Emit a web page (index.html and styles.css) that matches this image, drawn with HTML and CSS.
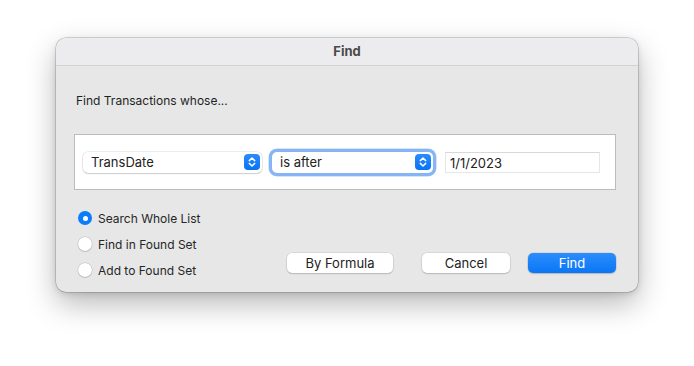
FILE: index.html
```html
<!DOCTYPE html>
<html lang="en">
<head>
    <meta charset="UTF-8">
    <title>Find</title>
    <link rel="stylesheet" href="styles.css">
</head>
<body>
    <div class="window">
        <div class="titlebar">Find</div>

        <div class="content">
            <div class="prompt">Find Transactions whose...</div>

            <div class="criteria">
                <div class="popup popup-field">
                    <span>TransDate</span>
                    <span class="stepper">
                        <svg width="16" height="16" viewBox="0 0 16 16"><path d="M5.3 6.6 L8 4 L10.7 6.6 M5.3 9.4 L8 12 L10.7 9.4" fill="none" stroke="#fff" stroke-width="1.5" stroke-linecap="round" stroke-linejoin="round"/></svg>
                    </span>
                </div>
                <div class="popup popup-op focused">
                    <span>is after</span>
                    <span class="stepper">
                        <svg width="16" height="16" viewBox="0 0 16 16"><path d="M5.3 6.6 L8 4 L10.7 6.6 M5.3 9.4 L8 12 L10.7 9.4" fill="none" stroke="#fff" stroke-width="1.5" stroke-linecap="round" stroke-linejoin="round"/></svg>
                    </span>
                </div>
                <div class="textfield">1/1/2023</div>
            </div>

            <div class="bottom">
                <div class="radios">
                    <label class="radio"><span class="dot checked"></span>Search Whole List</label>
                    <label class="radio"><span class="dot"></span>Find in Found Set</label>
                    <label class="radio"><span class="dot"></span>Add to Found Set</label>
                </div>
                <div class="buttons">
                    <button class="btn btn-formula">By Formula</button>
                    <button class="btn btn-cancel">Cancel</button>
                    <button class="btn btn-primary">Find</button>
                </div>
            </div>
        </div>
    </div>
</body>
</html>
```

FILE: styles.css
```css
html, body {
    min-height: 100%;
}

body {
    margin: 0;
    padding: 38px 0 0 56px;
    min-height: 100vh;
    box-sizing: border-box;
    background-color: #fff;
    font-family: 'Inter', 'Liberation Sans', sans-serif;
    font-size: 13px;
    color: #262626;
}

.window {
    width: 582px;
    height: 254px;
    box-sizing: border-box;
    background-color: #e7e7e7;
    border-radius: 10px;
    box-shadow: 0 0 0 0.5px rgba(0, 0, 0, 0.28), 0 12px 30px rgba(0, 0, 0, 0.28), 0 2px 6px rgba(0, 0, 0, 0.12);
    overflow: hidden;
    display: flex;
    flex-direction: column;
}

.titlebar {
    height: 28px;
    line-height: 27px;
    text-align: center;
    font-weight: 700;
    color: #4a4a4a;
    background-color: #ececee;
    border-bottom: 1px solid #d2d2d2;
    box-sizing: border-box;
}

.content {
    flex: 1;
    padding: 0 22px 10px 18px;
    display: flex;
    flex-direction: column;
}

.prompt {
    margin: 27px 0 0 2px;
    line-height: 16px;
    font-size: 12px;
    color: #1f1f1f;
}

.criteria {
    margin-top: 25px;
    height: 56px;
    box-sizing: border-box;
    background-color: #fff;
    border: 1px solid #bcbcbc;
    display: flex;
    align-items: center;
    padding: 0 8px;
}

.popup {
    height: 21px;
    box-sizing: border-box;
    background-color: #fff;
    border-radius: 5px;
    box-shadow: 0 0 0 0.5px rgba(0, 0, 0, 0.14), 0 1px 1.5px rgba(0, 0, 0, 0.14);
    display: flex;
    align-items: center;
    justify-content: space-between;
    padding: 0 2px 0 8px;
    color: #222;
}

.popup-field {
    width: 179px;
}

.popup-op {
    width: 161px;
    margin-left: 10px;
}

.popup.focused {
    box-shadow: 0 0 0 3px #86b4f4, 0 0 0 3.5px #a9c9f5;
}

.stepper {
    width: 16px;
    height: 16px;
    border-radius: 4px;
    background: linear-gradient(#2a8cfd, #0874f2);
    display: flex;
}

.textfield {
    margin-left: 12px;
    width: 155px;
    height: 21px;
    line-height: 21px;
    box-sizing: border-box;
    padding-left: 4px;
    background-color: #fff;
    border: 1px solid #e6e6e6;
    border-top-color: #d8d8d8;
    color: #222;
}

.bottom {
    margin-top: 15px;
    display: flex;
    justify-content: space-between;
    align-items: flex-end;
}

.radios {
    display: flex;
    flex-direction: column;
    padding-left: 4px;
}

.radio {
    height: 26px;
    display: flex;
    align-items: center;
    font-size: 12px;
    color: #262626;
}

.dot {
    width: 14px;
    height: 14px;
    box-sizing: border-box;
    border-radius: 50%;
    background-color: #fff;
    box-shadow: 0 0 0 0.5px rgba(0, 0, 0, 0.2), 0 1px 1px rgba(0, 0, 0, 0.12);
    margin-right: 6px;
    position: relative;
}

.dot.checked {
    background-color: #0a7cfc;
    box-shadow: none;
}

.dot.checked::after {
    content: "";
    position: absolute;
    left: 4.5px;
    top: 4.5px;
    width: 5px;
    height: 5px;
    border-radius: 50%;
    background-color: #fff;
}

.buttons {
    display: flex;
    margin-bottom: 10px;
}

.btn {
    height: 20px;
    border: none;
    border-radius: 5px;
    background-color: #fff;
    box-shadow: 0 0 0 0.5px rgba(0, 0, 0, 0.12), 0 1px 1.5px rgba(0, 0, 0, 0.16);
    font-family: inherit;
    font-size: 13px;
    color: #222;
    padding: 0;
}

.btn-formula {
    width: 106px;
}

.btn-cancel {
    width: 88px;
    margin-left: 29px;
}

.btn-primary {
    width: 88px;
    margin-left: 18px;
    color: #fff;
    background: linear-gradient(#2b8dfd, #0a76f5);
}
```
